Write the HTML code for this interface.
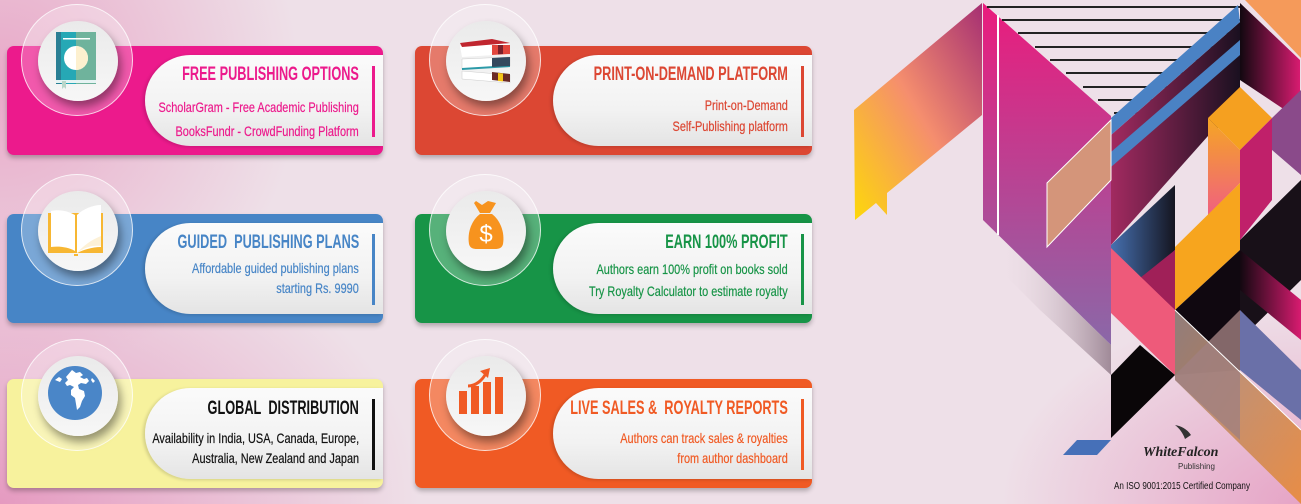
<!DOCTYPE html>
<html><head><meta charset="utf-8">
<style>
*{margin:0;padding:0;box-sizing:border-box}
body{width:1301px;height:504px;overflow:hidden;position:relative;font-family:"Liberation Sans",sans-serif;
background:radial-gradient(ellipse 420px 300px at 0px 504px,#e59ac0 0%,rgba(236,200,220,0) 100%),radial-gradient(ellipse 300px 300px at 0px 80px,#e8a9c8 0%,rgba(236,200,220,0) 100%),radial-gradient(ellipse 300px 200px at 1301px 504px,#e6a4c6 0%,rgba(236,200,220,0) 100%),#eee0e8;}
.card{position:absolute;height:109px;border-radius:7px;box-shadow:0 3px 5px rgba(0,0,0,.25)}
.panel{position:absolute;top:9px;bottom:9px;right:0;border-radius:46px 0 0 46px;background:linear-gradient(#fbfbfb,#f2f2f2 60%,#e4e4e4);box-shadow:-2px 1px 3px rgba(0,0,0,.15)}
.bar{position:absolute;right:8px;top:20px;height:71px;width:3px}
.txt{position:absolute;right:24px;text-align:right;white-space:nowrap}
.t{font-weight:bold;font-size:19px;transform:scaleX(.67);transform-origin:right;line-height:20px}
.s{font-size:14px;transform:scaleX(.78);transform-origin:right;-webkit-text-stroke:.2px currentColor}
.ring{position:absolute;width:112px;height:112px;border-radius:50%;border:1.5px solid rgba(255,255,255,.75);background:rgba(255,255,255,.28)}
.inner{position:absolute;left:16px;top:16px;width:80px;height:80px;border-radius:50%;background:linear-gradient(#eaeaea,#f7f7f7);box-shadow:3px 6px 9px rgba(0,0,0,.4)}
.inner svg{position:absolute;left:0;top:0}
</style></head><body>

<div class="card" style="left:7px;top:46px;width:376px;background:#ec1a8c">
 <div class="panel" style="left:138px"></div>
 <div class="bar" style="background:#ec1a8c"></div>
 <div class="txt" style="top:19px;color:#ec1a8c"><div class="t">FREE PUBLISHING OPTIONS</div></div>
 <div class="txt" style="top:49px;color:#ec1a8c;line-height:24px"><div class="s">ScholarGram - Free Academic Publishing</div><div class="s">BooksFundr - CrowdFunding Platform</div></div>
</div>
<div class="ring" style="left:21px;top:4px"><div class="inner"><svg width="80" height="80" viewBox="0 0 80 80">
<rect x="18" y="11" width="40" height="52" rx="2" fill="#26a8b5"/><rect x="38" y="11" width="20" height="52" fill="#6fb39c"/><rect x="18" y="11" width="5" height="52" fill="#2a7f94"/>
<rect x="25" y="17" width="27" height="1.5" fill="#fff"/><circle cx="38" cy="37" r="12" fill="#fff"/><path d="M38 25a12 12 0 0 1 0 24z" fill="#fdf0cf"/>
<rect x="18" y="59" width="40" height="3" fill="#e6f3f3"/><path d="M24 60h4v8l-2-2-2 2z" fill="#b9d6c9"/></svg></div></div>

<div class="card" style="left:415px;top:46px;width:397px;background:#dc4733">
 <div class="panel" style="left:138px"></div>
 <div class="bar" style="background:#dc4733"></div>
 <div class="txt" style="top:19px;color:#dc4733"><div class="t">PRINT-ON-DEMAND PLATFORM</div></div>
 <div class="txt" style="top:49px;color:#dc4733;line-height:21px"><div class="s">Print-on-Demand</div><div class="s">Self-Publishing platform</div></div>
</div>
<div class="ring" style="left:429px;top:4px"><div class="inner"><svg width="80" height="80" viewBox="0 0 80 80">
<path d="M16 50l48 4v8l-48-4z" fill="#fff" stroke="#ccc" stroke-width=".5"/><path d="M46 51l18 2v8l-18-2z" fill="#6b2a25"/><path d="M52 52l5 .5v8l-5-.5z" fill="#f5c518"/>
<path d="M16 38l48-2v9l-48 3z" fill="#fff" stroke="#ccc" stroke-width=".5"/><path d="M16 47l48-3v2l-48 3z" fill="#2b9aa8"/><path d="M46 37l18-1v9l-18 1z" fill="#34495e"/>
<path d="M14 25l32-6 18 5v9l-48 3z" fill="#fff"/><path d="M14 22l32-4 18 4-48 4z" fill="#c0262f"/><path d="M46 24l18 0v9l-18 1z" fill="#e2463d"/><path d="M52 24l5 0v9l-5 .3z" fill="#7a1f2a"/></svg></div></div>

<div class="card" style="left:7px;top:214px;width:376px;background:#4785c6">
 <div class="panel" style="left:138px"></div>
 <div class="bar" style="background:#4785c6"></div>
 <div class="txt" style="top:19px;color:#4785c6"><div class="t">GUIDED&nbsp; PUBLISHING PLANS</div></div>
 <div class="txt" style="top:44px;color:#4785c6;line-height:20px"><div class="s">Affordable guided publishing plans</div><div class="s">starting Rs. 9990</div></div>
</div>
<div class="ring" style="left:21px;top:174px"><div class="inner"><svg width="80" height="80" viewBox="0 0 80 80">
<rect x="10" y="22" width="55" height="40" fill="#f7b733"/><path d="M36 63h4v2h-4z" fill="#f7b733"/>
<path d="M13 20c8-2 17 0 24 4v36c-7-4-16-5-24-4z" fill="#fff"/><path d="M39 24c6-6 16-10 24-10v42c-9 0-18 3-24 6z" fill="#fff"/><path d="M39 62c8-6 16-8 24-7v-10c-10 4-18 10-24 17z" fill="#fdf1d6"/></svg></div></div>

<div class="card" style="left:415px;top:214px;width:397px;background:#179447">
 <div class="panel" style="left:138px"></div>
 <div class="bar" style="background:#179447"></div>
 <div class="txt" style="top:19px;color:#179447"><div class="t">EARN 100% PROFIT</div></div>
 <div class="txt" style="top:44px;color:#179447;line-height:22px"><div class="s">Authors earn 100% profit on books sold</div><div class="s">Try Royalty Calculator to estimate royalty</div></div>
</div>
<div class="ring" style="left:429px;top:174px"><div class="inner"><svg width="80" height="80" viewBox="0 0 80 80">
<path d="M30 10l6 4 6-4 8 2-6 10h-10l-6-10z" fill="#f7931e"/><path d="M34 23h12c8 6 13 18 11 30-1 4-4 5-8 5h-18c-4 0-7-1-8-5-2-12 3-24 11-30z" fill="#f7931e"/>
<text x="40" y="51" text-anchor="middle" font-family="Liberation Sans" font-size="24" fill="#fff">$</text></svg></div></div>

<div class="card" style="left:7px;top:379px;width:376px;background:#f7f29d">
 <div class="panel" style="left:138px"></div>
 <div class="bar" style="background:#111"></div>
 <div class="txt" style="top:20px;color:#111"><div class="t">GLOBAL&nbsp; DISTRIBUTION</div></div>
 <div class="txt" style="top:49px;color:#111;line-height:20px"><div class="s">Availability in India, USA, Canada, Europe,</div><div class="s">Australia, New Zealand and Japan</div></div>
</div>
<div class="ring" style="left:21px;top:339px"><div class="inner"><svg width="80" height="80" viewBox="0 0 80 80">
<circle cx="37" cy="37" r="27" fill="#4a86c8"/>
<path d="M34 14l4 3 4-1 3 3-3 2 4 2 3-1 2 3-3 3-5-1-3 2 1 4 5 2 1 5-3 5-2 6-3 3-1-6-1-6-4-3 0-5 3-3-4-2-3 1-2-3 3-3-2-3z" fill="#fff"/>
<path d="M17 24l4-3 3 2-2 3z" fill="#fff"/><path d="M54 22l3 3-2 2-2-3z" fill="#fff"/></svg></div></div>

<div class="card" style="left:415px;top:379px;width:397px;background:#f05a24">
 <div class="panel" style="left:138px"></div>
 <div class="bar" style="background:#f05a24"></div>
 <div class="txt" style="top:20px;color:#f05a24"><div class="t">LIVE SALES &amp;&nbsp; ROYALTY REPORTS</div></div>
 <div class="txt" style="top:49px;color:#f05a24;line-height:20px"><div class="s">Authors can track sales &amp; royalties</div><div class="s">from author dashboard</div></div>
</div>
<div class="ring" style="left:429px;top:339px"><div class="inner"><svg width="80" height="80" viewBox="0 0 80 80">
<rect x="13" y="35" width="8" height="23" fill="#f05a24"/><rect x="25" y="30" width="8" height="28" fill="#f05a24"/><rect x="37" y="26" width="8" height="32" fill="#f05a24"/><rect x="49" y="21" width="8" height="37" fill="#f05a24"/>
<path d="M22 30c8 0 14-6 17-11" stroke="#f05a24" stroke-width="3" fill="none"/><path d="M34 15l10-3-2 10z" fill="#f05a24"/></svg></div></div>

<svg style="position:absolute;left:0;top:0" width="1301" height="504" viewBox="0 0 1301 504">
<defs>
<linearGradient id="rib" x1="0" y1="1" x2="1" y2="0"><stop offset="0" stop-color="#fdd80a"/><stop offset=".5" stop-color="#f58e6e"/><stop offset="1" stop-color="#a52f72"/></linearGradient>
<linearGradient id="slab" x1="0" y1="0" x2="0" y2="1"><stop offset="0" stop-color="#ea1c7d"/><stop offset="1" stop-color="#8a68a8"/></linearGradient>
<linearGradient id="shad" x1="0" y1="0" x2="1" y2="0"><stop offset="0" stop-color="#eee0e8" stop-opacity="0"/><stop offset="1" stop-color="#a08a98"/></linearGradient>
<linearGradient id="dk" x1="0" y1="0" x2="1" y2="0"><stop offset="0" stop-color="#a22a60"/><stop offset="1" stop-color="#1a1020"/></linearGradient>
<linearGradient id="bl" x1="0" y1="0" x2="1" y2="0"><stop offset="0" stop-color="#4670b0"/><stop offset="1" stop-color="#151520"/></linearGradient>
<linearGradient id="rt" x1="0" y1="0" x2="1" y2="0"><stop offset="0" stop-color="#120810"/><stop offset="1" stop-color="#d81b70"/></linearGradient>
<linearGradient id="or" x1="0" y1="0" x2="0" y2="1"><stop offset="0" stop-color="#f5a623"/><stop offset="1" stop-color="#f06080"/></linearGradient>
<linearGradient id="tn" x1="0" y1="0" x2="1" y2="1"><stop offset="0" stop-color="#a08a88"/><stop offset="1" stop-color="#e88a38"/></linearGradient>
</defs>
<polygon points="854,110 982,3 982,115 887,193 887,215 876,203 855,220" fill="url(#rib)"/>
<polygon points="998,235 1111,345 1111,375 1040,310 1000,270" fill="url(#shad)"/>
<polygon points="983,3 1111,116 1111,345 983,220" fill="url(#slab)"/>
<line x1="998" y1="15" x2="998" y2="235" stroke="#fff" stroke-width="2"/>
<g stroke="#222" stroke-width="2">
<line x1="987" y1="7" x2="1240" y2="7"/><line x1="1002" y1="20" x2="1240" y2="20"/><line x1="1018" y1="33" x2="1240" y2="33"/><line x1="1035" y1="47" x2="1240" y2="47"/><line x1="1050" y1="60" x2="1240" y2="60"/><line x1="1066" y1="73" x2="1240" y2="73"/><line x1="1083" y1="87" x2="1240" y2="87"/><line x1="1098" y1="100" x2="1240" y2="100"/><line x1="1114" y1="113" x2="1240" y2="113"/><line x1="1130" y1="127" x2="1240" y2="127"/></g>
<polygon points="1111,135 1240,22 1240,100 1111,245" fill="url(#dk)"/>
<polygon points="1238,5 1240,22 1111,135 1111,118" fill="#4a82c4"/>
<polygon points="1240,40 1240,55 1111,167 1111,152" fill="#4a82c4"/>
<polygon points="1047,183 1111,120 1111,180 1047,247" fill="#d4957a" stroke="#fff" stroke-width="1"/>
<polygon points="1111,245 1175,185 1175,250 1111,313" fill="url(#bl)"/>
<polygon points="1240,3 1300,60 1300,120 1240,80" fill="url(#rt)"/>
<polygon points="1245,0 1301,0 1301,58" fill="#f59a5a"/>
<polygon points="1272,118 1301,90 1301,175 1272,150" fill="#8a4a8a"/>
<polygon points="1208,118 1240,150 1240,183 1208,215" fill="url(#or)"/>
<polygon points="1240,87 1272,118 1240,150 1208,118" fill="#f5a020"/>
<polygon points="1240,150 1272,118 1272,200 1240,240" fill="#c0206a"/>
<polygon points="1175,247 1240,183 1240,250 1175,310" fill="#f7a51e"/>
<polygon points="1240,240 1301,180 1301,280 1240,340" fill="#181018"/>
<polygon points="1240,250 1301,300 1301,340 1240,290" fill="url(#rt)"/>
<polygon points="1140,278 1175,250 1175,310" fill="#a02058"/>
<polygon points="1111,248 1175,310 1175,375 1111,313" fill="#ee5a7a"/>
<polygon points="1175,310 1240,250 1240,370 1175,375" fill="#100810"/>
<polygon points="1240,310 1301,370 1301,420 1240,370" fill="#6a70a8"/>
<polygon points="1111,375 1140,345 1175,375 1111,438" fill="#0a0608"/>
<polygon points="1175,310 1301,430 1301,504 1175,380" fill="url(#tn)" opacity=".9"/>
<polygon points="1175,375 1240,310 1240,440 1175,380" fill="#a08080" opacity=".8"/>
<line x1="1175" y1="310" x2="1301" y2="430" stroke="#fff" stroke-width="1"/>
<polygon points="1063,455 1077,440 1111,440 1097,455" fill="#4670b8"/>
<text x="1143" y="456" font-family="Liberation Serif" font-style="italic" font-weight="bold" font-size="14" fill="#222">WhiteFalcon</text>
<text x="1178" y="469" font-family="Liberation Sans" font-size="8" fill="#333">Publishing</text>
<path d="M1175 425c4 3 8 8 10 14l6-4c-4-6-10-9-16-10z" fill="#333"/>
<text x="1114" y="489" font-family="Liberation Sans" font-size="10" fill="#111" textLength="136" lengthAdjust="spacingAndGlyphs">An ISO 9001:2015 Certified Company</text>
</svg>
</body></html>
